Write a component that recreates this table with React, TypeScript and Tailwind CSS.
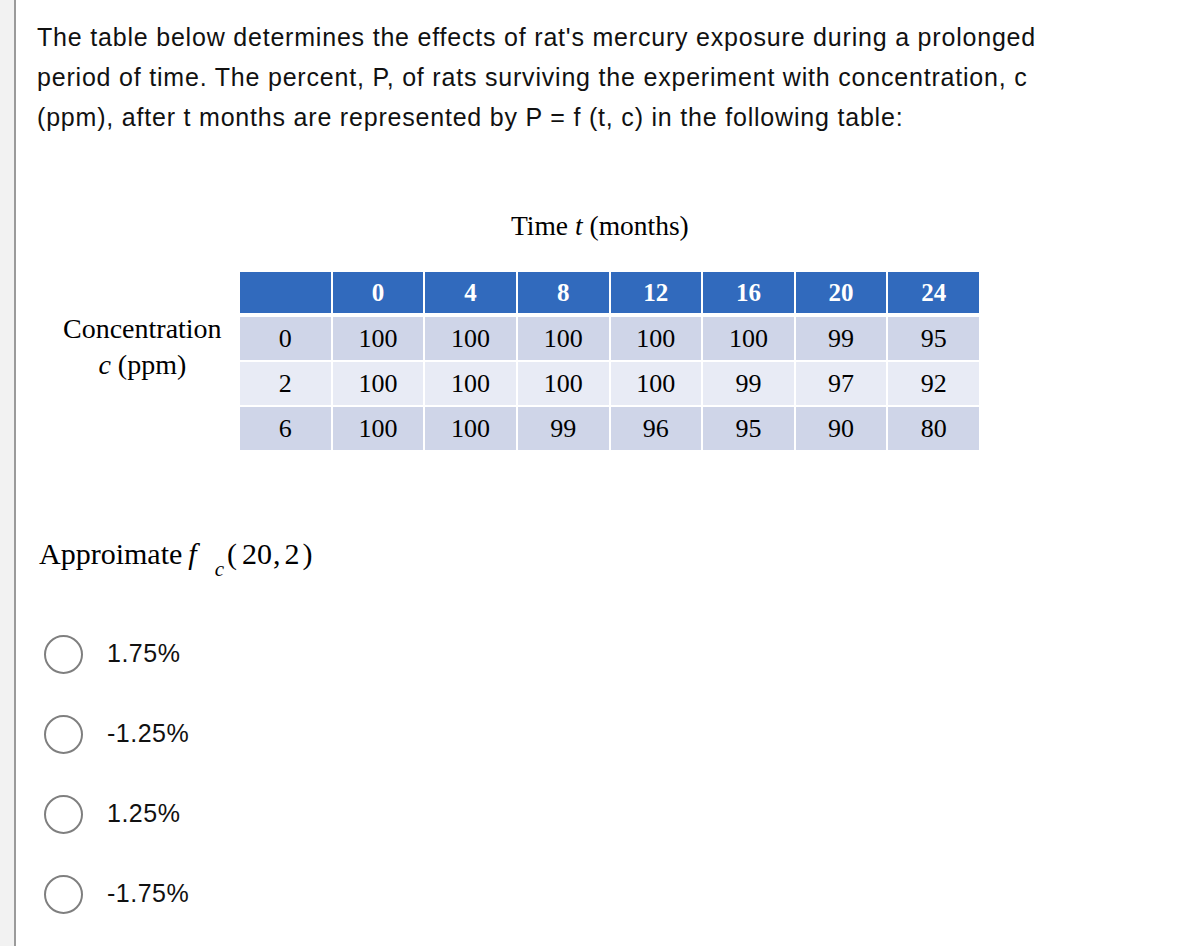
import React from "react";

const header = ["", "0", "4", "8", "12", "16", "20", "24"];
const rows = [
  ["0", "100", "100", "100", "100", "100", "99", "95"],
  ["2", "100", "100", "100", "100", "99", "97", "92"],
  ["6", "100", "100", "99", "96", "95", "90", "80"],
];
const options = ["1.75%", "-1.25%", "1.25%", "-1.75%"];

const serif = { fontFamily: '"Liberation Serif", "Times New Roman", serif' };

export default function App() {
  return (
    <div className="flex w-[1188px] h-[946px] bg-white overflow-hidden">
      <div className="w-[14px] shrink-0 bg-[#f2f2f2]" />
      <div className="w-[2px] shrink-0 bg-[#9b9b9b]" />
      <div
        className="flex-1 pl-[21px] pt-[17px] text-[#111]"
        style={{ fontFamily: '"Liberation Sans", Arial, sans-serif' }}
      >
        <p className="text-[25px] leading-[40px] tracking-[0.8px] whitespace-nowrap">
          The table below determines the effects of rat's mercury exposure during a prolonged
          <br />
          period of time. The percent, P, of rats surviving the experiment with concentration, c
          <br />
          (ppm), after t months are represented by P = f (t, c) in the following table:
        </p>

        <div className="text-black">
          <div className="mt-[71px] h-[36px] leading-[36px] text-[27.5px] pl-[474px]" style={serif}>
            Time <i>t</i> (months)
          </div>

          <div className="mt-[28px] flex">
            <div className="w-[203px] pt-[39px]" style={serif}>
              <div className="ml-[26px] inline-flex flex-col items-center text-[28px] leading-[36px]">
                <span>Concentration</span>
                <span>
                  <i>c</i> (ppm)
                </span>
              </div>
            </div>
            <div className="w-[739px] flex flex-col" style={serif}>
              <div className="grid grid-cols-8 gap-x-[2px] h-[41px]">
                {header.map((h, i) => (
                  <div
                    key={i}
                    className="bg-[#316abd] text-white font-bold text-[25px] flex items-center justify-center"
                  >
                    {h}
                  </div>
                ))}
              </div>
              <div className="flex flex-col gap-y-[2px] mt-[4px]">
                {rows.map((r, ri) => (
                  <div key={ri} className="grid grid-cols-8 gap-x-[2px] h-[43px]">
                    {r.map((c, ci) => (
                      <div
                        key={ci}
                        className={
                          (ri % 2 === 0 ? "bg-[#cfd5e8]" : "bg-[#e8ebf5]") +
                          " text-[26px] flex items-center justify-center"
                        }
                      >
                        {c}
                      </div>
                    ))}
                  </div>
                ))}
              </div>
            </div>
          </div>

          <div className="mt-[83px] h-[40px] flex items-center text-[30px] text-black" style={serif}>
            <span className="ml-[2px]">Approimate</span>
            <span className="ml-[6px] italic">f</span>
            <span className="relative top-[17px] ml-[18px] italic text-[21px]">c</span>
            <span className="ml-[3px]">(</span>
            <span className="ml-[5px]">20</span>
            <span className="ml-[1px]">,</span>
            <span className="ml-[4px]">2</span>
            <span className="ml-[3px]">)</span>
          </div>
        </div>

        <div className="mt-[61px] flex flex-col gap-y-[40px]">
          {options.map((o) => (
            <div key={o} className="h-[40px] flex items-center">
              <div className="ml-[7px] w-[39px] h-[39px] rounded-full border-2 border-[#7f7f7f] bg-white" />
              <span className="ml-[24px] text-[25px] tracking-[0.5px] text-[#111]">{o}</span>
            </div>
          ))}
        </div>
      </div>
    </div>
  );
}
